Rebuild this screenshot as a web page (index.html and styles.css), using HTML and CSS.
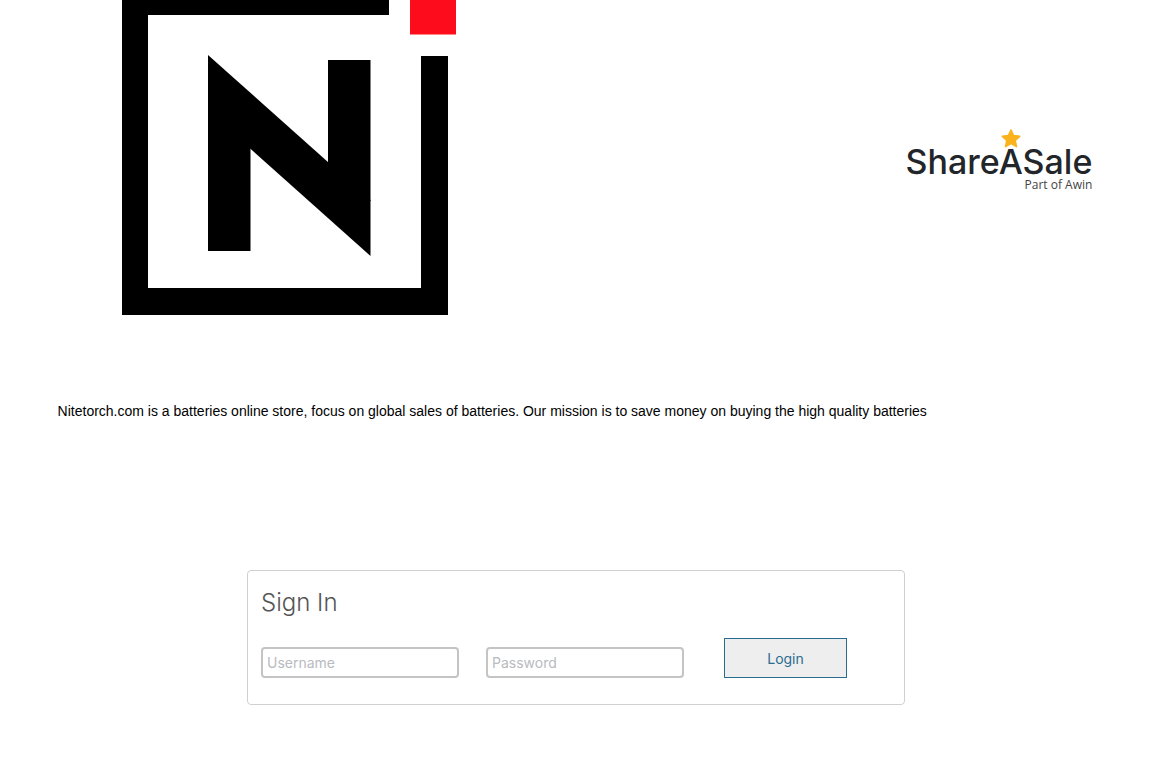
FILE: index.html
```html
<!DOCTYPE html>
<html lang="en">
<head>
    <meta charset="UTF-8">
    <title>Nitetorch - Sign In</title>
    <link rel="stylesheet" href="styles.css">
</head>
<body>

    <header class="header">
        <!-- Nitetorch logo -->
        <svg class="merchant-logo" viewBox="0 0 335 315" role="img" aria-label="Nitetorch">
            <rect x="0" y="0" width="26" height="315"/>
            <rect x="0" y="0" width="267" height="15"/>
            <rect x="0" y="288" width="326" height="27"/>
            <rect x="299" y="56" width="27" height="259"/>
            <rect x="86" y="110" width="42.5" height="141"/>
            <rect x="206" y="60" width="42.5" height="141"/>
            <polygon points="86,55 248.5,200 248.5,256 86,111"/>
            <rect x="288" y="0" width="46" height="34.5" fill="#fd0d1b"/>
        </svg>

        <div class="sas-logo">
            <svg class="sas-star" viewBox="0 0 20 19" aria-hidden="true">
                <path d="M10 1 L12.6 6.6 L18.7 7.3 L14.2 11.5 L15.5 17.6 L10 14.6 L4.5 17.6 L5.8 11.5 L1.3 7.3 L7.4 6.6 Z" fill="#fab31e" stroke="#fab31e" stroke-width="1.6" stroke-linejoin="round"/>
            </svg>
            <span class="sas-name">ShareASale</span>
            <span class="sas-sub">Part of Awin</span>
        </div>
    </header>

    <main>
        <p class="description">Nitetorch.com is a batteries online store, focus on global sales of batteries. Our mission is to save money on buying the high quality batteries</p>

        <form class="sign-in">
            <h2>Sign In</h2>
            <div class="fields">
                <input type="text" name="username" placeholder="Username" aria-label="Username">
                <input type="password" name="password" placeholder="Password" aria-label="Password">
                <button type="submit">Login</button>
            </div>
        </form>
    </main>

</body>
</html>
```

FILE: styles.css
```css
* {
    box-sizing: border-box;
}

body {
    margin: 0;
    padding: 0 5%;
    font-family: "Liberation Sans", Arial, sans-serif;
    font-size: 14px;
    color: #000;
    background: #fff;
}

.header {
    display: flex;
    justify-content: space-between;
    align-items: center;
    padding: 0 2px 0 64px;
}

.merchant-logo {
    display: block;
    width: 335px;
}

/* ShareASale wordmark */
.sas-logo {
    display: flex;
    flex-direction: column;
    align-items: flex-end;
    padding-top: 8px;
    font-family: Inter, sans-serif;
    color: #22262a;
}

.sas-star {
    width: 20px;
    margin-right: 71px;
}

.sas-name {
    font-size: 34px;
    font-weight: 500;
    line-height: 28px;
}

.sas-sub {
    font-family: "Open Sans", sans-serif;
    font-size: 12px;
    line-height: 18px;
    color: #444;
}

.description {
    margin: 87px 0 0;
    line-height: 18px;
}

/* sign in box */
.sign-in {
    max-width: 658px;
    margin: 150px auto 64px;
    padding: 15px 13px 26px;
    border: 1px solid #d0d0d0;
    border-radius: 4px;
    font-family: Inter, sans-serif;
}

.sign-in h2 {
    margin: 0 0 18px;
    font-size: 24px;
    font-weight: 300;
    line-height: 34px;
    color: #555;
}

.fields {
    display: flex;
    align-items: flex-end;
}

.fields input {
    width: 198px;
    height: 31px;
    margin-right: 27px;
    padding: 0 4px;
    border: 2px solid #c4c4c4;
    border-radius: 4px;
    font-family: inherit;
    font-size: 14px;
    color: #555;
}

.fields input::placeholder {
    color: #b8bbc0;
}

.fields button {
    width: 123px;
    height: 40px;
    margin-left: 13px;
    border: 1px solid #2a6c90;
    background: #eee;
    font-family: inherit;
    font-size: 14px;
    color: #2a6c90;
}
```
